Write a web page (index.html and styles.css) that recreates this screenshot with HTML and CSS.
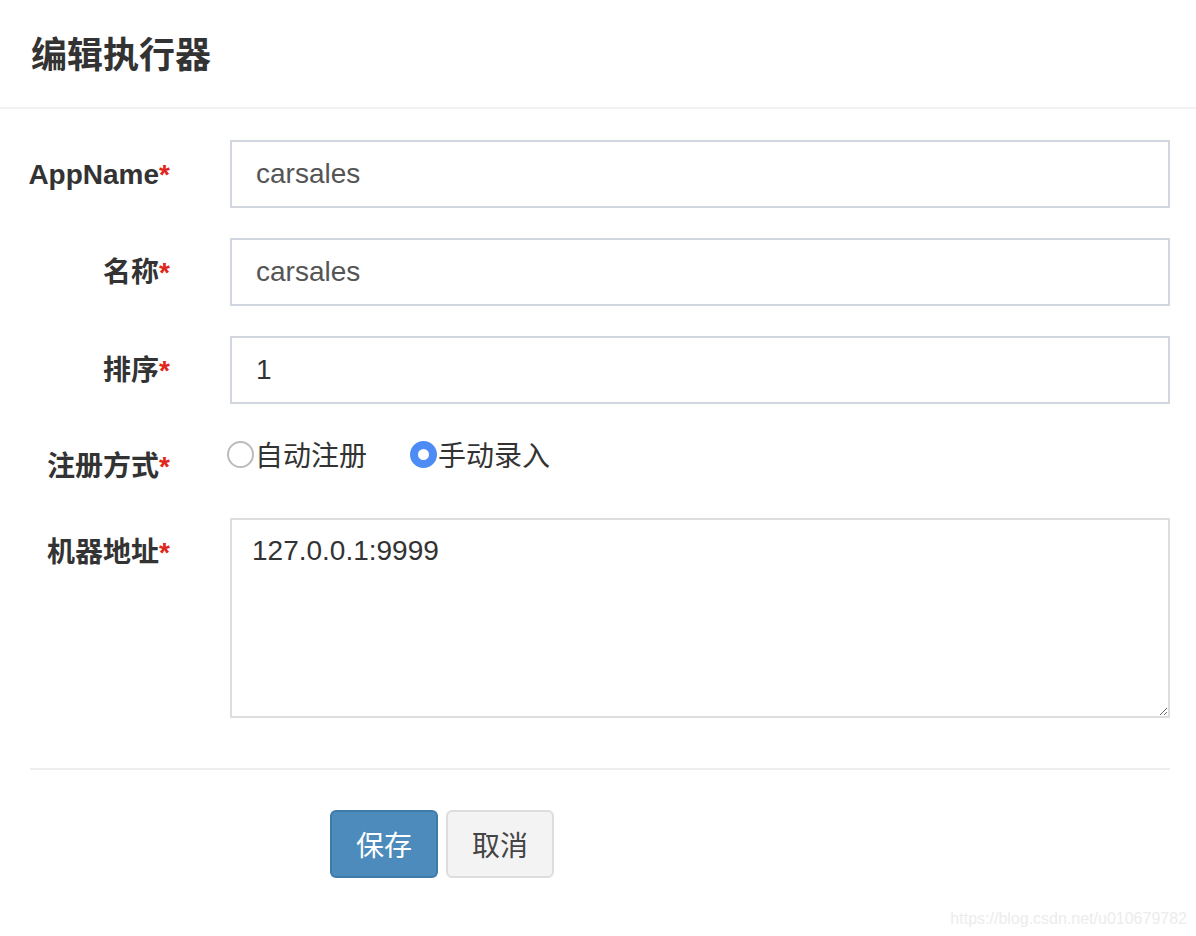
FILE: index.html
```html
<!DOCTYPE html>
<html lang="zh-CN">
<head>
    <meta charset="UTF-8">
    <title>编辑执行器</title>
    <link rel="stylesheet" href="styles.css">
</head>
<body>
    <div class="modal">
        <div class="modal-header">
            <h4 class="modal-title">编辑执行器</h4>
        </div>
        <div class="modal-body">
            <form class="form">
                <div class="row">
                    <label class="label">AppName<span class="req">*</span></label>
                    <div class="field"><input class="input" type="text" value="carsales"></div>
                </div>
                <div class="row">
                    <label class="label">名称<span class="req">*</span></label>
                    <div class="field"><input class="input" type="text" value="carsales"></div>
                </div>
                <div class="row">
                    <label class="label">排序<span class="req">*</span></label>
                    <div class="field"><input class="input dark" type="text" value="1"></div>
                </div>
                <div class="row radio-row">
                    <label class="label">注册方式<span class="req">*</span></label>
                    <div class="field radios">
                        <span class="radio"><span class="dot"></span>自动注册</span>
                        <span class="radio"><span class="dot on"></span>手动录入</span>
                    </div>
                </div>
                <div class="row last">
                    <label class="label">机器地址<span class="req">*</span></label>
                    <div class="field">
                        <textarea class="textarea">127.0.0.1:9999</textarea>
                    </div>
                </div>
                <hr class="sep">
                <div class="actions">
                    <button type="button" class="btn primary">保存</button>
                    <button type="button" class="btn default">取消</button>
                </div>
            </form>
        </div>
        <div class="mark">https://blog.csdn.net/u010679782</div>
    </div>
</body>
</html>
```

FILE: styles.css
```css
body {
    margin: 0;
    background: #fff;
    font-family: "Liberation Sans", "Noto Sans CJK SC", sans-serif;
    color: #333;
}

.modal {
    width: 1196px;
    height: 936px;
    position: relative;
    overflow: hidden;
}

.modal-header {
    height: 107px;
    border-bottom: 2px solid #f2f2f2;
    padding: 0 31px;
    display: flex;
    align-items: center;
}

.modal-title {
    margin: 0;
    font-size: 36px;
    font-weight: bold;
    color: #333;
    position: relative;
    top: -2px;
}

.modal-body {
    padding: 31px 26px 0 0;
}

.row {
    display: grid;
    grid-template-columns: 170px 1fr;
    column-gap: 60px;
    margin-bottom: 30px;
}

.row.last {
    margin-bottom: 0;
}

.label {
    text-align: right;
    font-weight: bold;
    font-size: 28px;
    line-height: 40px;
    padding-top: 15px;
}

.req {
    color: #e0271b;
}

.input {
    box-sizing: border-box;
    width: 100%;
    height: 68px;
    border: 2px solid #d2d6de;
    padding: 0 24px;
    font-family: "Liberation Sans", sans-serif;
    font-size: 28px;
    color: #555;
    outline: none;
}

.input.dark {
    color: #333;
}

.radio-row {
    margin-bottom: 14px;
}

.radio-row .label {
    padding-top: 13px;
}

.radios {
    display: flex;
    align-items: center;
    height: 70px;
    margin-left: -3px;
    gap: 43px;
}

.radio {
    display: flex;
    align-items: center;
    font-size: 28px;
    color: #333;
    position: relative;
    top: -15px;
}

.dot {
    box-sizing: border-box;
    width: 27px;
    height: 27px;
    border-radius: 50%;
    border: 2px solid #bbb;
    background: #fff;
    margin-right: 1px;
}

.dot.on {
    border: 8px solid #4d8cf5;
    background: #fff;
}

.textarea {
    box-sizing: border-box;
    display: block;
    width: 100%;
    height: 200px;
    border: 2px solid #ddd;
    padding: 11px 20px;
    font-family: "Liberation Sans", sans-serif;
    font-size: 28px;
    line-height: 40px;
    color: #333;
    resize: vertical;
    outline: none;
}

.sep {
    border: 0;
    border-top: 2px solid #eee;
    margin: 50px 0 40px 30px;
}

.actions {
    display: flex;
    gap: 8px;
    padding-left: 330px;
}

.btn {
    width: 108px;
    height: 68px;
    border-radius: 6px;
    font-family: "Noto Sans CJK SC", sans-serif;
    font-size: 28px;
    cursor: pointer;
}

.btn.primary {
    background: #4c8bbb;
    border: 2px solid #3f7ba8;
    color: #fff;
}

.btn.default {
    background: #f3f3f3;
    border: 2px solid #ddd;
    color: #444;
}

.mark {
    position: absolute;
    right: 9px;
    bottom: 8px;
    font-size: 16px;
    color: #ececec;
}
```
